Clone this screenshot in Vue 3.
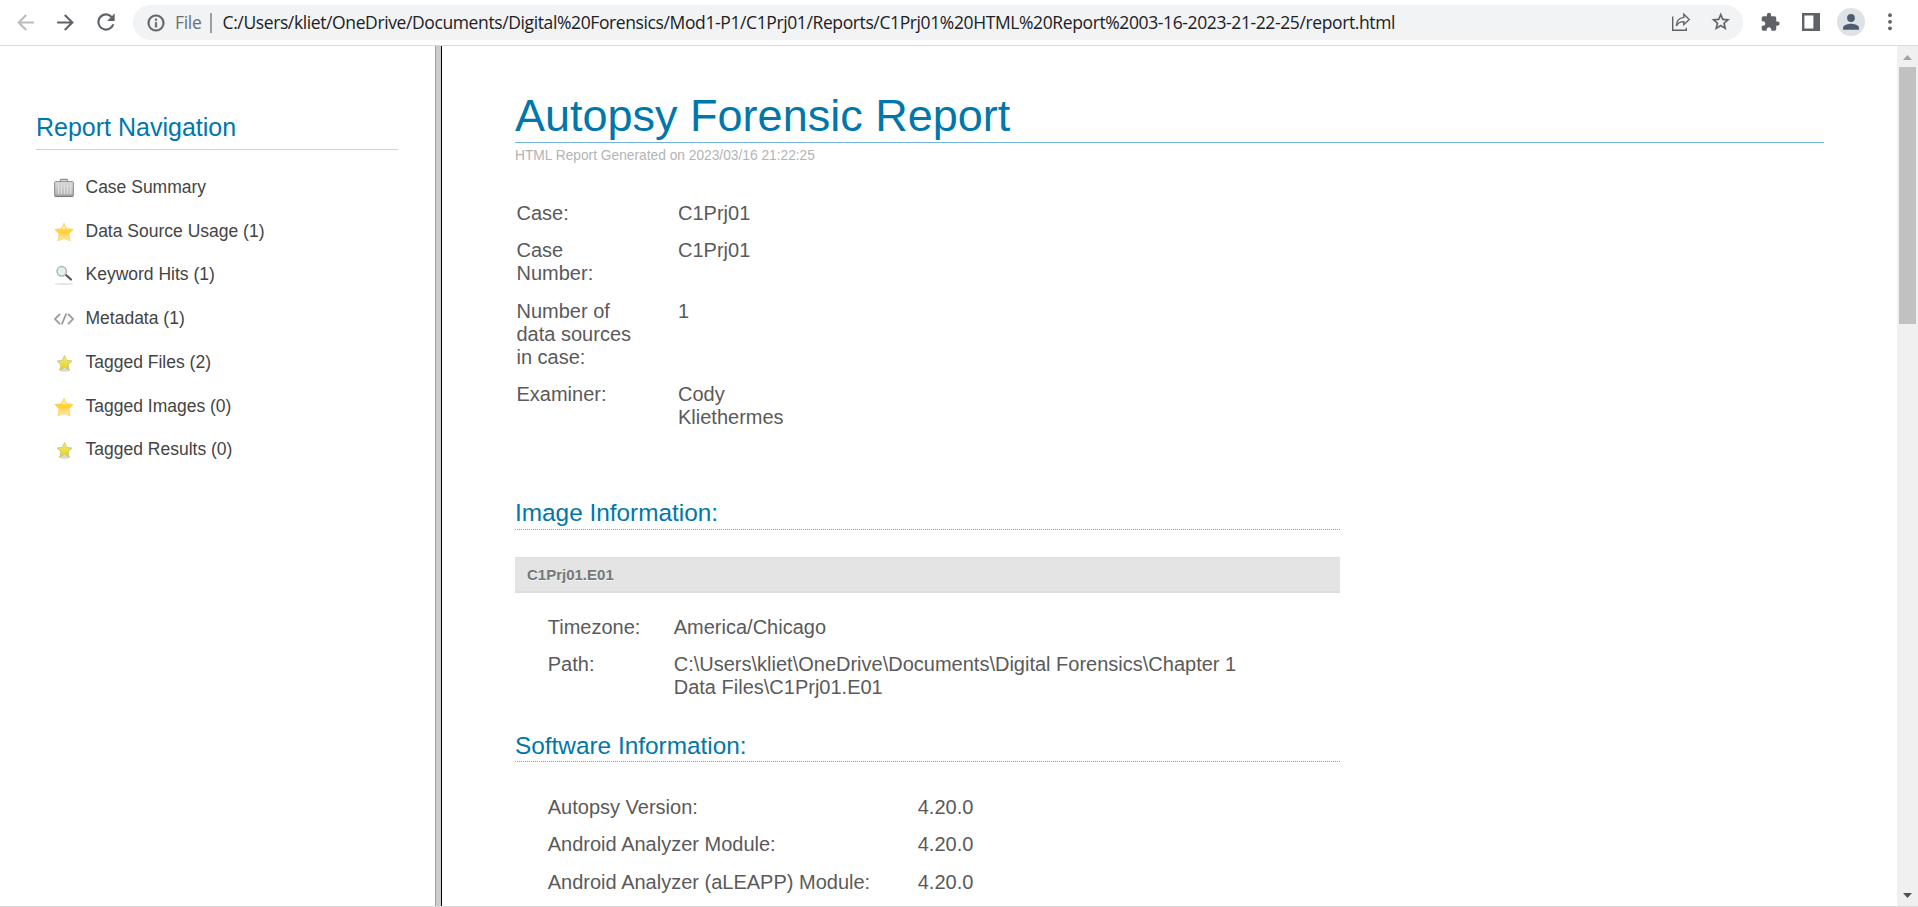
<script setup>
const filePath =
  'C:/Users/kliet/OneDrive/Documents/Digital%20Forensics/Mod1-P1/C1Prj01/Reports/C1Prj01%20HTML%20Report%2003-16-2023-21-22-25/report.html'

const navItems = [
  { icon: 'case', label: 'Case Summary' },
  { icon: 'star', label: 'Data Source Usage (1)' },
  { icon: 'search', label: 'Keyword Hits (1)' },
  { icon: 'code', label: 'Metadata (1)' },
  { icon: 'tag', label: 'Tagged Files (2)' },
  { icon: 'star', label: 'Tagged Images (0)' },
  { icon: 'tag', label: 'Tagged Results (0)' },
]

const caseRows = [
  ['Case:', 'C1Prj01'],
  ['Case Number:', 'C1Prj01'],
  ['Number of data sources in case:', '1'],
  ['Examiner:', 'Cody Kliethermes'],
]

const imageRows = [
  ['Timezone:', 'America/Chicago'],
  ['Path:', 'C:\\Users\\kliet\\OneDrive\\Documents\\Digital Forensics\\Chapter 1 Data Files\\C1Prj01.E01'],
]

const softwareRows = [
  ['Autopsy Version:', '4.20.0'],
  ['Android Analyzer Module:', '4.20.0'],
  ['Android Analyzer (aLEAPP) Module:', '4.20.0'],
]
</script>

<template>
  <div class="browser">
    <svg class="defs" width="0" height="0" aria-hidden="true">
      <defs>
        <linearGradient id="gold" x1="0" y1="0" x2="0" y2="1">
          <stop offset="0" stop-color="#ffe27a" />
          <stop offset="0.5" stop-color="#ffd02c" />
          <stop offset="0.62" stop-color="#ffd75c" />
          <stop offset="1" stop-color="#ffeab0" />
        </linearGradient>
        <linearGradient id="lemon" x1="0" y1="0" x2="0" y2="1">
          <stop offset="0" stop-color="#f4ee7a" />
          <stop offset="1" stop-color="#e3cf26" />
        </linearGradient>
        <linearGradient id="steel" x1="0" y1="0" x2="0" y2="1">
          <stop offset="0" stop-color="#dcdcdc" />
          <stop offset="1" stop-color="#ababab" />
        </linearGradient>
      </defs>
    </svg>

    <header class="toolbar">
      <svg class="back" width="25" height="25" viewBox="0 0 24 24"><path d="M20 11H7.83l5.59-5.59L12 4l-8 8 8 8 1.41-1.41L7.83 13H20z" fill="#babcbe" /></svg>
      <svg class="forward" width="25" height="25" viewBox="0 0 24 24"><path d="M12 4l-1.41 1.41L16.17 11H4v2h12.17l-5.58 5.59L12 20l8-8z" fill="#5f6368" /></svg>
      <svg class="reload" width="26" height="26" viewBox="0 0 24 24"><path d="M17.65 6.35A7.96 7.96 0 0 0 12 4a8 8 0 1 0 7.73 10h-2.08A6 6 0 1 1 12 6c1.66 0 3.14.69 4.22 1.78L13 11h7V4z" fill="#5f6368" /></svg>
      <div class="address">
        <svg class="info" width="20" height="20" viewBox="0 0 24 24"><path d="M11 17h2v-6h-2zm1-15a10 10 0 1 0 0 20 10 10 0 0 0 0-20zm0 18a8 8 0 1 1 0-16 8 8 0 0 1 0 16zM11 9h2V7h-2z" fill="#5f6368" stroke="#5f6368" stroke-width=".5" /></svg>
        <span class="scheme">File</span>
        <span class="sep"></span>
        <span class="path">{{ filePath }}</span>
        <svg class="share" width="20" height="20" viewBox="0 0 20 20" fill="none" stroke="#5f6368" stroke-width="1.4">
          <path d="M1.700 4.500v13.800h13.600v-2.600" />
          <path d="M12.800 2.200l5.400 5.300-5.400 5.200V9.600C9.200 9.500 6.900 10.800 5.400 13.900 5.500 9.100 8.300 5.900 12.800 5.400z" stroke-linejoin="miter" />
        </svg>
        <svg class="bookmark" width="21.500" height="21.500" viewBox="0 0 24 24"><path d="M22 9.240l-7.190-.620L12 2 9.190 8.630 2 9.240l5.460 4.730L5.820 21 12 17.270 18.180 21l-1.630-7.030zM12 15.400l-3.760 2.270 1-4.280-3.320-2.880 4.380-.380L12 6.100l1.710 4.040 4.380.380-3.320 2.880 1 4.280z" fill="#5f6368" stroke="#5f6368" stroke-width=".3" /></svg>
      </div>
      <svg class="extensions" width="20.500" height="20.500" viewBox="0 0 24 24"><path d="M20.500 11H19V7c0-1.100-.9-2-2-2h-4V3.500C13 2.120 11.880 1 10.500 1S8 2.120 8 3.500V5H4c-1.100 0-1.990.9-1.990 2v3.800H3.500c1.490 0 2.700 1.210 2.700 2.700s-1.210 2.700-2.700 2.700H2V20c0 1.100.9 2 2 2h3.800v-1.500c0-1.490 1.210-2.700 2.700-2.700s2.700 1.210 2.700 2.700V22H17c1.100 0 2-.9 2-2v-4h1.500a2.500 2.500 0 0 0 0-5z" fill="#5f6368" /></svg>
      <svg class="panel" width="18" height="18" viewBox="0 0 18 18"><path fill-rule="evenodd" d="M0 0h18v18H0zM2.400 2.400v13.200h9V2.400z" fill="#5f6368" /></svg>
      <svg class="avatar" width="28" height="28" viewBox="0 0 28 28">
        <circle cx="14" cy="14" r="14" fill="#dee1e6" />
        <circle cx="14" cy="10" r="3.900" fill="#4f5b70" />
        <path d="M6 21.800v-2c0-2.700 5.300-4 8-4s8 1.300 8 4v2z" fill="#4f5b70" />
      </svg>
      <svg class="menu" width="4" height="18" viewBox="0 0 4 18" fill="#5f6368"><circle cx="2" cy="2.200" r="1.900" /><circle cx="2" cy="8.800" r="1.900" /><circle cx="2" cy="15.300" r="1.900" /></svg>
    </header>

    <main class="frames">
      <nav class="sidebar">
        <h1>Report Navigation</h1>
        <ul>
          <li v-for="item in navItems" :key="item.label">
            <svg v-if="item.icon === 'case'" width="20" height="20" viewBox="0 0 20 20">
              <path d="M6.500 4V2.500q0-1 1-1h5q1 0 1 1V4" fill="none" stroke="#8c8c8c" stroke-width="1.400" />
              <rect x=".6" y="3.600" width="18.800" height="15" rx="1" fill="url(#steel)" stroke="#8f8f8f" />
              <path d="M4.500 7v9M7.500 7v9M10.500 7v9M13.500 7v9M16.500 7v9" stroke="#dedede" stroke-width="1.400" />
              <path d="M1 18.300h18" stroke="#7d7d7d" stroke-width="1.200" />
            </svg>
            <svg v-else-if="item.icon === 'star'" width="20" height="20" viewBox="0 0 20 20">
              <path d="M10 1.200l2.600 5.400 6.500.8-4.200 4.500 1.300 7-6.200-2.600-6.200 2.600 1.300-7L.9 7.400l6.500-.8z" fill="url(#gold)" stroke="#fbd368" stroke-width=".8" stroke-linejoin="round" />
              <path d="M10 3.200l1.700 3.900H8.300z" fill="#fff0b4" />
            </svg>
            <svg v-else-if="item.icon === 'search'" width="20" height="20" viewBox="0 0 20 20">
              <ellipse cx="10" cy="19" rx="9.500" ry="1" fill="#e4e4e4" />
              <path d="M11.500 9.500l5.500 5" stroke="#555" stroke-width="2.200" stroke-linecap="round" />
              <circle cx="7.700" cy="6.300" r="4.700" fill="#e3eff0" stroke="#b1b6b6" stroke-width="1.500" />
            </svg>
            <svg v-else-if="item.icon === 'code'" width="20" height="20" viewBox="0 0 20 20" fill="none" stroke="#999" stroke-width="1.800">
              <path d="M6 4.800L1 10l5 5.200M14 4.800l5 5.200-5 5.200M12.300 4.500L7.700 15.500" />
            </svg>
            <svg v-else width="20" height="20" viewBox="0 0 20 20">
              <ellipse cx="10.500" cy="17" rx="5.500" ry="1.700" fill="#d5d8de" />
              <path d="M10.500 2.500l2.200 4.900 5.300.6-3.900 3.700 1 5.200-4.600-2.400-4.600 2.400 1-5.200L3 8l5.300-.6z" fill="url(#lemon)" stroke="#cfc05a" stroke-width=".8" stroke-linejoin="round" />
            </svg>
            <span>{{ item.label }}</span>
          </li>
        </ul>
      </nav>
      <div class="divider"></div>

      <article class="report">
        <h1>Autopsy Forensic Report</h1>
        <p class="generated">HTML Report Generated on 2023/03/16 21:22:25</p>

        <dl class="case-table">
          <template v-for="[k, v] in caseRows" :key="k"><dt>{{ k }}</dt><dd>{{ v }}</dd></template>
        </dl>

        <section class="info-section image">
          <h2>Image Information:</h2>
          <h3>C1Prj01.E01</h3>
          <dl>
            <template v-for="[k, v] in imageRows" :key="k"><dt>{{ k }}</dt><dd>{{ v }}</dd></template>
          </dl>
        </section>

        <section class="info-section software">
          <h2>Software Information:</h2>
          <dl>
            <template v-for="[k, v] in softwareRows" :key="k"><dt>{{ k }}</dt><dd>{{ v }}</dd></template>
          </dl>
        </section>
      </article>

      <div class="scrollbar">
        <svg width="21" height="21" viewBox="0 0 21 21"><path d="M6 14l4.500-5 4.500 5z" fill="#a3a3a3" /></svg>
        <div class="thumb"></div>
        <svg class="down" width="21" height="21" viewBox="0 0 21 21"><path d="M6 8l4.500 5 4.500-5z" fill="#505050" /></svg>
      </div>
    </main>
  </div>
</template>

<style>
body {
  margin: 0;
  background: #fff;
}
</style>

<style scoped>
.browser {
  display: flex;
  flex-direction: column;
  width: 1918px;
  height: 907px;
  overflow: hidden;
  box-sizing: border-box;
  border-bottom: 1px solid #d9d9d9;
  background: #fff;
  font-family: "Liberation Sans", Arial, sans-serif;
}
.defs { position: absolute; }
svg { display: block; flex: none; }
h1, h2, h3, p, dl, dd, ul { margin: 0; padding: 0; font-weight: normal; }

.toolbar {
  display: flex;
  align-items: center;
  flex: none;
  box-sizing: border-box;
  height: 46px;
  padding: 0 0 1px 13px;
  border-bottom: 1px solid #d9dadc;
}
.forward { margin-left: 15px; }
.reload { margin-left: 15px; }
.address {
  display: flex;
  align-items: center;
  box-sizing: border-box;
  width: 1610px;
  height: 35px;
  margin: 1px 0 0 14px;
  padding-left: 12.5px;
  border-radius: 17.5px;
  background: #f1f3f4;
  font-family: "Open Sans", "Noto Sans", sans-serif;
  font-size: 17.5px;
  line-height: 24px;
  white-space: nowrap;
  color: #202124;
}
.scheme, .path { margin-bottom: 1.5px; }
.scheme { width: 34.5px; margin-left: 9.5px; color: #6b6f74; letter-spacing: -0.3px; }
.sep { width: 2px; height: 20px; margin-right: 11px; background: #9b9ea2; }
.path { width: 1448px; letter-spacing: -0.387px; }
.share, .bookmark { margin-bottom: 1px; }
.bookmark { margin-left: 19px; }
.extensions { margin-left: 17px; }
.panel { margin-left: 21px; }
.avatar { margin-left: 17px; }
.menu { margin-left: 23.5px; }

.frames { display: flex; flex: 1; min-height: 0; }
.sidebar { box-sizing: border-box; width: 435px; padding: 66px 37px 0 36px; }
.sidebar h1 {
  height: 37px;
  border-bottom: 1px solid #d2d2d2;
  color: #07a;
  font-size: 25px;
  line-height: 30px;
}
.sidebar ul { padding: 16px 0 0 18px; list-style: none; }
.sidebar li {
  display: flex;
  align-items: center;
  gap: 11.5px;
  height: 43.75px;
  color: #444;
  font-size: 17.5px;
  line-height: 20px;
}
.sidebar li span { margin-bottom: 2px; }
.divider {
  box-sizing: border-box;
  width: 7px;
  border-left: 1px solid #a0a0a0;
  border-right: 1px solid #000;
  background: #ccc;
}

.report { flex: 1; padding: 44px 73px 0; color: #5a5a5a; }
.report h1 {
  border-bottom: 1px solid #74b6da;
  color: #07a;
  font-size: 45px;
  line-height: 52px;
}
.generated { margin-top: 4px; color: #b4b4b4; font-size: 13.75px; line-height: 17px; }
dl { display: grid; row-gap: 2px; font-size: 20px; line-height: 23px; }
dt, dd { padding: 6.25px 0; }
.case-table { grid-template-columns: 120px 120px; column-gap: 41.5px; margin: 31.35px 0 0 1.5px; }
.info-section { width: 825px; }
.info-section h2 {
  border-bottom: 1px dotted #6fadca;
  padding-bottom: 2px;
  color: #07a;
  font-size: 24.375px;
  line-height: 28px;
}
.info-section h3 {
  margin-top: 27px;
  padding-left: 12px;
  border-top: 1px solid #ddd;
  border-bottom: 2px solid #ddd;
  background: #e4e4e4;
  color: #777;
  font-size: 15px;
  font-weight: bold;
  line-height: 33px;
  text-shadow: #e9f9fd 0 1px 0;
}
.image h2 { margin-top: 63.65px; }
.image dl { grid-template-columns: 126px 580px; margin: 16.35px 0 0 32.75px; }
.software h2 { margin-top: 26.65px; padding-bottom: 1px; }
.software dl { grid-template-columns: 370px 200px; margin: 27.35px 0 0 32.75px; }

.scrollbar { display: flex; flex-direction: column; align-items: center; width: 21px; background: #f0f0f0; }
.thumb { width: 17px; height: 257px; background: #c1c1c1; }
.scrollbar .down { margin-top: auto; }
</style>
